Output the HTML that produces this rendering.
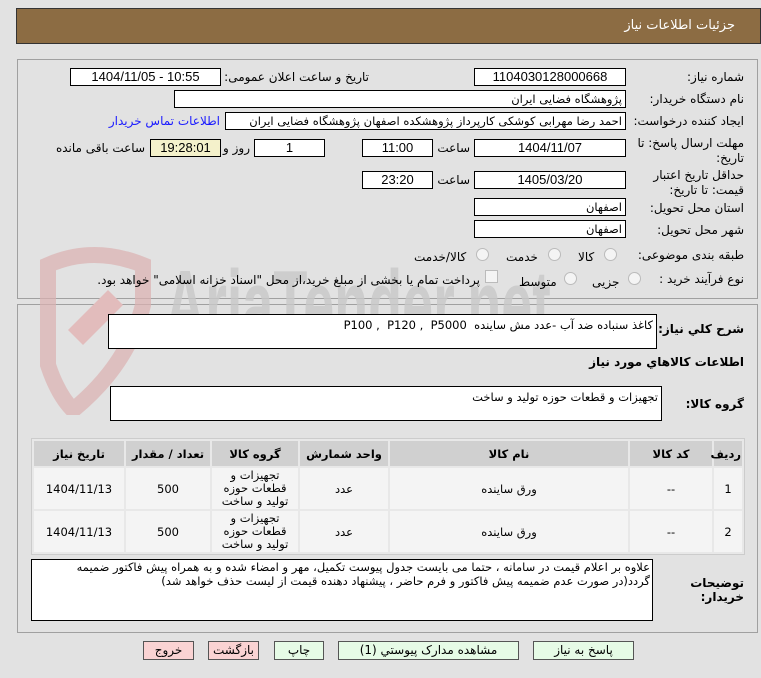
<!DOCTYPE html>
<html><head><meta charset="utf-8"><style>
body{margin:0;width:761px;height:678px;background:#e2e2e2;position:relative;overflow:hidden;font-family:"DejaVu Sans","Liberation Sans",sans-serif;font-size:12px;color:#000}
.a{position:absolute;white-space:nowrap}
.hdr{left:16px;top:8px;width:743px;height:34px;background:#8c6c43;border:1px solid #333}
.p{border:1px solid #a0a0a0;background:#e2e2e2}
.in{position:absolute;background:#fff;border:1px solid #000;height:16px;line-height:16px;box-sizing:content-box;text-align:center;font-family:"Liberation Sans","DejaVu Sans",sans-serif;font-size:13px}
.r{text-align:right;padding-right:3px;font-family:"DejaVu Sans",sans-serif;font-size:11.5px;direction:rtl}
.l{direction:rtl;text-align:right}
.w{white-space:normal}
.rad{position:absolute;width:11px;height:11px;border-radius:50%;border:1px solid #bbb;background:#f4f4f4}
table{border-collapse:separate;border-spacing:2px;font-size:11.5px;table-layout:fixed}
td{text-align:center;background:#f4f4f4}
th{background:#d0d0d0;height:23px;font-size:11.5px}
.btn{position:absolute;top:641px;height:17px;border:1px solid #555;text-align:center;line-height:17px;font-size:12px}
.g{background:#e6fbe6}.k{background:#fad3d3}
</style></head><body>
<div class="a hdr"></div>
<div class="a" style="right:26px;top:18px;color:#fff;font-size:13px">جزئیات اطلاعات نیاز</div>
<div class="a p" style="left:17px;top:59px;width:739px;height:238px"></div>
<div class="a p" style="left:17px;top:304px;width:739px;height:327px"></div>
<!-- watermark -->
<svg class="a" style="left:18px;top:245px" width="160" height="170" viewBox="0 0 160 170"><path d="M30 20 Q75 0 125 20 L125 60 Q110 120 55 165 Q40 150 30 120Z" fill="none" stroke="#dcb0b0" stroke-width="16" opacity=".7"/><path d="M50 85 L90 45 L105 60 L65 100Z" fill="#e2bcbc"/></svg>
<div class="a" style="left:165px;top:250px;font-family:'Liberation Sans',sans-serif;font-size:96px;font-weight:bold;color:#c8c8c8;opacity:.8;transform:scaleX(0.58);transform-origin:left top">AriaTender.net</div>
<!-- rows -->
<div class="a l" style="right:17px;top:70px">شماره نیاز:</div>
<div class="in" style="left:474px;top:68px;width:150px">1104030128000668</div>
<div class="a l" style="right:392px;top:70px">تاریخ و ساعت اعلان عمومی:</div>
<div class="in" style="left:70px;top:68px;width:149px">1404/11/05 - 10:55</div>
<div class="a l" style="right:17px;top:92px">نام دستگاه خریدار:</div>
<div class="in r" style="left:174px;top:90px;width:447px">پژوهشگاه فضایی ایران</div>
<div class="a l" style="right:17px;top:114px">ایجاد کننده درخواست:</div>
<div class="in r" style="left:225px;top:112px;width:396px">احمد رضا مهرابی کوشکی کارپرداز پژوهشکده اصفهان پژوهشگاه فضایی ایران</div>
<div class="a l" style="right:541px;top:114px;color:#1a1aff">اطلاعات تماس خریدار</div>
<div class="a l w" style="right:17px;top:136px;line-height:15px;width:110px">مهلت ارسال پاسخ: تا تاریخ:</div>
<div class="in" style="left:474px;top:139px;width:150px">1404/11/07</div>
<div class="a l" style="right:291px;top:141px">ساعت</div>
<div class="in" style="left:362px;top:139px;width:69px">11:00</div>
<div class="in" style="left:254px;top:139px;width:69px">1</div>
<div class="a l" style="right:511px;top:141px">روز و</div>
<div class="in" style="left:150px;top:139px;width:69px;background:#f4f1cb">19:28:01</div>
<div class="a l" style="right:616px;top:141px">ساعت باقی مانده</div>
<div class="a l w" style="right:17px;top:168px;line-height:15px;width:110px">حداقل تاریخ اعتبار قیمت: تا تاریخ:</div>
<div class="in" style="left:474px;top:171px;width:150px">1405/03/20</div>
<div class="a l" style="right:291px;top:173px">ساعت</div>
<div class="in" style="left:362px;top:171px;width:69px">23:20</div>
<div class="a l" style="right:17px;top:201px">استان محل تحویل:</div>
<div class="in r" style="left:474px;top:198px;width:147px">اصفهان</div>
<div class="a l" style="right:17px;top:223px">شهر محل تحویل:</div>
<div class="in r" style="left:474px;top:220px;width:147px">اصفهان</div>
<div class="a l" style="right:17px;top:248px">طبقه بندی موضوعی:</div>
<div class="rad" style="left:604px;top:248px"></div><div class="a" style="left:578px;top:250px">کالا</div>
<div class="rad" style="left:548px;top:248px"></div><div class="a" style="left:506px;top:250px">خدمت</div>
<div class="rad" style="left:476px;top:248px"></div><div class="a" style="left:414px;top:250px">کالا/خدمت</div>
<div class="a l" style="right:17px;top:272px">نوع فرآیند خرید :</div>
<div class="rad" style="left:628px;top:272px"></div><div class="a" style="left:592px;top:275px">جزیی</div>
<div class="rad" style="left:564px;top:272px"></div><div class="a" style="left:519px;top:275px">متوسط</div>
<div class="a" style="left:485px;top:270px;width:11px;height:11px;border:1px solid #bbb;background:#f4f4f4"></div>
<div class="a l" style="right:281px;top:273px">پرداخت تمام یا بخشی از مبلغ خرید،از محل "اسناد خزانه اسلامی" خواهد بود.</div>
<!-- panel 2 -->
<div class="a l" style="right:17px;top:322px;font-weight:bold">شرح کلي نياز:</div>
<div class="in" dir="rtl" style="left:108px;top:314px;width:544px;height:33px;text-align:right;padding-right:3px;line-height:20px;font-family:'DejaVu Sans',sans-serif;font-size:11.5px">کاغذ سنباده ضد آب -عدد مش ساینده&nbsp; P100 ,&nbsp; P120 ,&nbsp; P5000</div>
<div class="a l" style="right:17px;top:355px;font-weight:bold">اطلاعات کالاهاي مورد نياز</div>
<div class="a l" style="right:17px;top:397px;font-weight:bold">گروه کالا:</div>
<div class="in r" style="left:110px;top:386px;width:547px;height:33px;line-height:20px">تجهیزات و قطعات حوزه تولید و ساخت</div>
<div class="a" style="left:31px;top:438px;width:712px;border:1px solid #ccc;background:#e8e8e8">
<table style="width:712px" dir="rtl">
<colgroup><col style="width:28px"><col style="width:82px"><col style="width:238px"><col style="width:88px"><col style="width:86px"><col style="width:84px"><col></colgroup>
<tr><th>ردیف</th><th>کد کالا</th><th>نام کالا</th><th>واحد شمارش</th><th>گروه کالا</th><th>تعداد / مقدار</th><th>تاریخ نیاز</th></tr>
<tr style="height:41px"><td>1</td><td>--</td><td>ورق ساینده</td><td>عدد</td><td style="line-height:13px;white-space:normal">تجهیزات و قطعات حوزه تولید و ساخت</td><td>500</td><td>1404/11/13</td></tr>
<tr style="height:41px"><td>2</td><td>--</td><td>ورق ساینده</td><td>عدد</td><td style="line-height:13px;white-space:normal">تجهیزات و قطعات حوزه تولید و ساخت</td><td>500</td><td>1404/11/13</td></tr>
</table></div>
<div class="a l w" style="right:17px;top:576px;font-weight:bold;line-height:14px;width:60px">توضیحات خریدار:</div>
<div class="in" style="left:31px;top:559px;width:614px;height:60px;text-align:right;direction:rtl;white-space:normal;line-height:14px;font-family:'DejaVu Sans',sans-serif;font-size:11.5px;padding:0 2px 0 4px">علاوه بر اعلام قیمت در سامانه ، حتما می بایست جدول پیوست تکمیل، مهر و امضاء شده و به همراه پیش فاکتور ضمیمه گردد(در صورت عدم ضمیمه پیش فاکتور و فرم حاضر ، پیشنهاد دهنده قیمت از لیست حذف خواهد شد)</div>
<div class="btn k" style="left:143px;width:49px">خروج</div>
<div class="btn k" style="left:208px;width:49px">بازگشت</div>
<div class="btn g" style="left:274px;width:48px">چاپ</div>
<div class="btn g" style="left:338px;width:179px">مشاهده مدارک پیوستي (1)</div>
<div class="btn g" style="left:533px;width:99px">پاسخ به نياز</div>
</body></html>
